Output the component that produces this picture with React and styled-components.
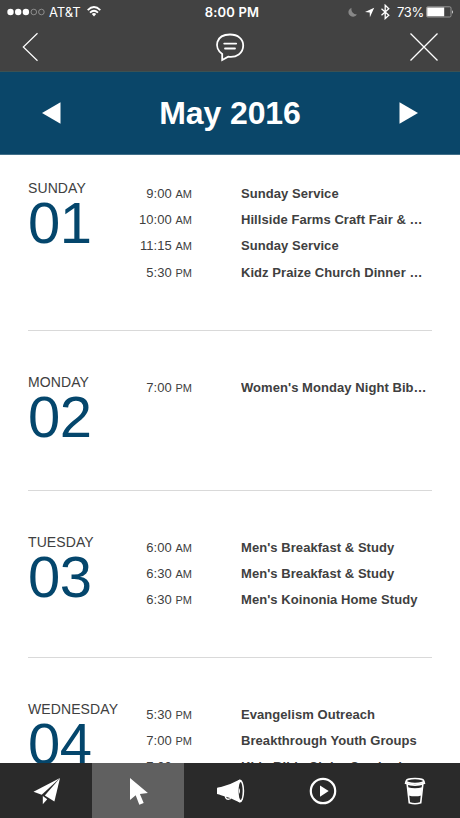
import React from 'react';
import styled, { createGlobalStyle } from 'styled-components';

const GlobalStyle = createGlobalStyle`
    body {
        margin: 0;
        font-family: "Liberation Sans", Arial, sans-serif;
        background-color: #ffffff;
        color: #404040;
    }
`

const Screen = styled.div`
    display: flex;
    flex-direction: column;
    width: 460px;
    height: 818px;
    overflow: hidden;
`

const Header = styled.header`
    flex: none;
    height: 72px;
    background-color: #424242;
    border-bottom: 1px solid #3c5152;
    box-sizing: border-box;
    color: #ffffff;
`

const StatusBar = styled.div`
    display: grid;
    grid-template-columns: 1fr auto 1fr;
    align-items: center;
    height: 23px;
    padding: 0 6px 0 7px;
    font-family: Inter, "Liberation Sans", sans-serif;
    font-size: 13px;
`

const StatusGroup = styled.div`
    display: flex;
    align-items: center;
    justify-content: ${props => props.$end ? 'flex-end' : 'flex-start'};
`

const Carrier = styled.span`
    margin: 0 6px 0 4px;
    font-size: 13px;
    letter-spacing: -0.05px;
`

const Clock = styled.span`
    padding-left: 3px;
    font-weight: 600;
    font-size: 13px;
    letter-spacing: 0.15px;
`

const Percent = styled.span`
    margin: 0 2px 0 6px;
    letter-spacing: -0.3px;
`

const NavBar = styled.nav`
    display: grid;
    grid-template-columns: 30px 1fr 30px;
    height: 47px;
    padding: 0 21px;
`

const IconButton = styled.button`
    display: flex;
    align-items: center;
    justify-content: ${props => props.$start ? 'flex-start' : 'center'};
    padding: 0;
    border: 0;
    background: none;
    color: #ffffff;
`

const MonthBar = styled.div`
    flex: none;
    display: flex;
    align-items: center;
    justify-content: space-between;
    height: 83px;
    padding: 0 41px;
    background-color: #0a4669;
    border-bottom: 1px solid #416f89;
    box-sizing: border-box;
    color: #ffffff;
`

const Month = styled.h1`
    margin: 0;
    font-size: 32px;
    line-height: 40px;
    letter-spacing: -0.1px;
    font-weight: bold;
`

const Calendar = styled.main`
    flex: 1;
    min-height: 0;
    overflow: hidden;
    padding: 0 28px;
`

const Day = styled.section`
    display: grid;
    grid-template-columns: 108px 56px 1fr;
    height: ${props => props.$height}px;
    padding-top: ${props => props.$top}px;
    border-bottom: 1px solid #d9d9d9;
    box-sizing: border-box;
`

const Weekday = styled.div`
    font-size: 14px;
    line-height: 16px;
    letter-spacing: 0.1px;
    white-space: nowrap;
`

const DayNumber = styled.div`
    font-size: 58px;
    line-height: 53px;
    letter-spacing: -0.5px;
    color: #04466c;
`

const EventList = styled.ul`
    grid-column: 2 / 4;
    margin: 0;
    padding: 1px 0 0;
    list-style: none;
`

const Event = styled.li`
    display: grid;
    grid-template-columns: 56px 186px;
    column-gap: 49px;
    height: 26.2px;
    line-height: 26.2px;
    font-size: 13px;
`

const Time = styled.span`
    text-align: right;
    white-space: nowrap;
    letter-spacing: 0.05px;
    > small {
    font-size: 11px;
    }
`

const Title = styled.span`
    overflow: hidden;
    text-overflow: ellipsis;
    white-space: nowrap;
    font-weight: bold;
    letter-spacing: 0.06px;
`

const TabBar = styled.nav`
    flex: none;
    display: grid;
    grid-template-columns: repeat(5, 1fr);
    height: 55px;
    background-color: #2a2a2a;
`

const Tab = styled(IconButton)`
    padding-left: 2px;
    background-color: ${props => props.$active ? '#606060' : 'transparent'};
`

const days = [
    { name: 'SUNDAY', number: '01', top: 25, height: 176, events: [
        ['9:00', 'AM', 'Sunday Service'],
        ['10:00', 'AM', 'Hillside Farms Craft Fair & Bake Sale'],
        ['11:15', 'AM', 'Sunday Service'],
        ['5:30', 'PM', 'Kidz Praize Church Dinner Theater'],
    ] },
    { name: 'MONDAY', number: '02', top: 43, height: 160, events: [
        ['7:00', 'PM', "Women's Monday Night Bible Study"],
    ] },
    { name: 'TUESDAY', number: '03', top: 43, height: 167, events: [
        ['6:00', 'AM', "Men's Breakfast & Study"],
        ['6:30', 'AM', "Men's Breakfast & Study"],
        ['6:30', 'PM', "Men's Koinonia Home Study"],
    ] },
    { name: 'WEDNESDAY', number: '04', top: 43, height: 180, events: [
        ['5:30', 'PM', 'Evangelism Outreach'],
        ['7:00', 'PM', 'Breakthrough Youth Groups'],
        ['7:00', 'PM', 'Kids Bible Club - Cambod'],
    ] },
]

const SignalIcon = () => (
    <svg width="38" height="8" viewBox="0 0 38 8">
        {[3.5, 11.2, 18.9].map(x => <circle key={x} cx={x} cy="4" r="3.2" fill="#fff" />)}
        {[26.8, 34.4].map(x => <circle key={x} cx={x} cy="4" r="2.8" fill="none" stroke="#aaa" strokeWidth=".7" />)}
    </svg>
)

const WifiIcon = () => (
    <svg width="14" height="11" viewBox="0 0 14 11" fill="none" stroke="#fff" strokeWidth="1.8">
        <path d="M.7 4.1Q7-2 13.3 4.1" />
        <path d="M3 6.6q4-3.7 8 0" />
        <path d="M4.8 8Q7 6.2 9.2 8L7 10.5Z" fill="#fff" stroke="none" />
    </svg>
)

const StatusIcons = () => (
    <svg width="44" height="16" viewBox="0 0 44 16">
        <path d="M4.6 3.7A4.6 4.6 0 1 0 10 10.4 5.3 5.3 0 0 1 4.6 3.7Z" fill="#888" />
        <path d="M27.2 3.8 18 8l4.7.5.2 4.7Z" fill="#fff" />
        <path d="m34.5 4.8 7.3 6.5-3.6 3.3V1.2l3.6 3.5-7.3 6.5" fill="none" stroke="#fff" strokeWidth="1.3" />
    </svg>
)

const BatteryIcon = () => (
    <svg width="28" height="12" viewBox="0 0 28 12">
        <rect x=".5" y=".8" width="24.5" height="10.2" rx="1.3" fill="none" stroke="#aaa" strokeWidth=".8" />
        <path d="M1.2 1.5h17v8.8h-17ZM26 4q1.8 2 0 4Z" fill="#fff" />
    </svg>
)

const BackIcon = () => (
    <svg width="18" height="30" viewBox="0 0 18 30" fill="none" stroke="#fff" strokeWidth="1.2">
        <path d="M16.5 1.3 2.3 15l14.2 13.7" />
    </svg>
)

const ChatIcon = () => (
    <svg width="30" height="30" viewBox="0 0 30 30" fill="none" stroke="#fff" strokeWidth="1.8" strokeLinecap="round">
        <path d="M7.2 28V22C-1.5 16 .5 2.5 15 2.5c8 0 13.2 4.6 13.2 11 0 7.8-6.7 12.3-15 11.1Z" />
        <path d="M9.2 11.6h12M10 16.5h10" />
    </svg>
)

const CloseIcon = () => (
    <svg width="30" height="30" viewBox="0 0 30 30" stroke="#fff" strokeWidth="1.3">
        <path d="M1.5 1.5l27 27M28.5 1.5l-27 27" />
    </svg>
)

const ArrowIcon = ({ d }) => (
    <svg width="20" height="22" viewBox="0 0 20 22" fill="#fff"><path d={d} /></svg>
)

const PlaneIcon = () => (
    <svg width="30" height="30" viewBox="0 0 30 30" fill="#fff">
        <path d="M28 2 1.5 15.7l8.2 3Z" />
        <path d="M28 2 12.8 19.5l9.6 6.1Z" />
        <path d="M10.8 20v8.2l4.4-5Z" />
    </svg>
)

const CursorIcon = () => (
    <svg width="30" height="30" viewBox="0 0 30 30" fill="#fff">
        <path d="M6 2v22l5.7-4.7 3.6 9.4 4.4-1.7-3.8-9.1 8-.8Z" />
    </svg>
)

const MegaphoneIcon = () => (
    <svg width="30" height="30" viewBox="0 0 30 30">
        <path d="M9 19q.5 6 6 3.5" fill="none" stroke="#fff" strokeWidth="1.3" />
        <path d="M1 12.4q0-1 4-1.3 10-2.8 18.8-7.6v23q-8.8-5-18.8-7.3-1.7-1.2-4-1.3Z" fill="#fff" />
        <ellipse cx="24" cy="15" rx="4.2" ry="11.5" fill="#fff" />
        <ellipse cx="24.6" cy="15" rx="2" ry="9" fill="#2a2a2a" />
        <path d="M23 12q2 3 0 6Z" fill="#fff" />
    </svg>
)

const PlayIcon = () => (
    <svg width="30" height="30" viewBox="0 0 30 30" fill="none">
        <circle cx="15" cy="15" r="12.2" stroke="#fff" strokeWidth="2.2" />
        <path d="m12 9.5 8.7 5.6-8.7 5.6Z" fill="#fff" />
    </svg>
)

const CupIcon = () => (
    <svg width="30" height="30" viewBox="0 0 30 30" fill="none" stroke="#fff" strokeWidth="1.6">
        <ellipse cx="15" cy="5" rx="8.7" ry="2.5" />
        <path d="M6.3 5 5.6 7.3Q15 11 24.4 7.3L23.7 5M7.2 8.3l2.1 18.5q5.7 1.8 11.4 0l2.1-18.5" />
        <path d="M7.8 11.2q7.2 2.3 14.4 0l-.8 8.3q-6.4 1.7-12.8 0Z" fill="#fff" stroke="none" />
    </svg>
)

const DayRow = ({ day }) => (
    <Day $height={day.height} $top={day.top}>
        <div>
            <Weekday>{day.name}</Weekday>
            <DayNumber>{day.number}</DayNumber>
        </div>
        <EventList>
            {day.events.map(([time, period, title], i) => (
                <Event key={i}>
                    <Time>{time} <small>{period}</small></Time>
                    <Title>{title}</Title>
                </Event>
            ))}
        </EventList>
    </Day>
)

const App = () => (
    <Screen>
        <GlobalStyle />
        <Header>
            <StatusBar>
                <StatusGroup>
                    <SignalIcon />
                    <Carrier>AT&amp;T</Carrier>
                    <WifiIcon />
                </StatusGroup>
                <Clock>8:00 PM</Clock>
                <StatusGroup $end>
                    <StatusIcons />
                    <Percent>73%</Percent>
                    <BatteryIcon />
                </StatusGroup>
            </StatusBar>
            <NavBar>
                <IconButton $start aria-label="Back"><BackIcon /></IconButton>
                <IconButton aria-label="Messages"><ChatIcon /></IconButton>
                <IconButton aria-label="Close"><CloseIcon /></IconButton>
            </NavBar>
        </Header>
        <MonthBar>
            <IconButton aria-label="Previous month"><ArrowIcon d="M1 11 19.5.2v21.6Z" /></IconButton>
            <Month>May 2016</Month>
            <IconButton aria-label="Next month"><ArrowIcon d="M19 11 .5.2v21.6Z" /></IconButton>
        </MonthBar>
        <Calendar>
            {days.map(day => <DayRow key={day.number} day={day} />)}
        </Calendar>
        <TabBar>
            <Tab aria-label="Send"><PlaneIcon /></Tab>
            <Tab aria-label="Events" $active><CursorIcon /></Tab>
            <Tab aria-label="News"><MegaphoneIcon /></Tab>
            <Tab aria-label="Media"><PlayIcon /></Tab>
            <Tab aria-label="Cafe"><CupIcon /></Tab>
        </TabBar>
    </Screen>
)

export default App;
